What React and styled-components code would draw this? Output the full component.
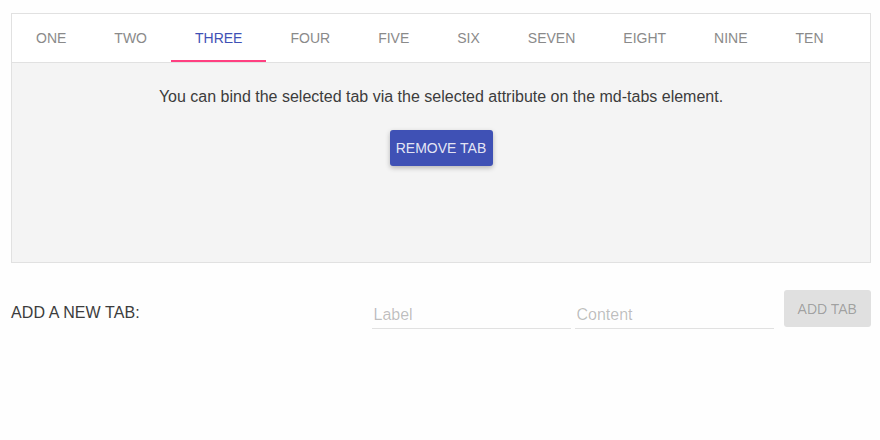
import React from 'react';
import styled, { createGlobalStyle } from 'styled-components';

const tabs = ['One', 'Two', 'Three', 'Four', 'Five', 'Six', 'Seven', 'Eight', 'Nine', 'Ten'];

const App = () => {
  const selected = 2;
  return (
    <Page>
      <GlobalStyle />
      <Card>
        <TabBar>
          {tabs.map((t, i) => (
            <Tab key={t} active={i === selected}>
              {t}
            </Tab>
          ))}
        </TabBar>
        <Content>
          <p>You can bind the selected tab via the selected attribute on the md-tabs element.</p>
          <RaisedButton>Remove Tab</RaisedButton>
        </Content>
      </Card>
      <AddRow>
        <AddLabel>ADD A NEW TAB:</AddLabel>
        <Field placeholder="Label" />
        <Field placeholder="Content" />
        <FlatButton disabled>Add Tab</FlatButton>
      </AddRow>
    </Page>
  );
};

export default App;

const GlobalStyle = createGlobalStyle`
  body {
    margin: 0;
    background: #fefefe;
    font-family: "Liberation Sans", Arial, sans-serif;
  }
`;

const Page = styled.div`
  padding: 13px 9px 0 11px;
`;

const Card = styled.div`
  border: 1px solid #e1e1e1;
  background: #fff;
  height: 248px;
  display: flex;
  flex-direction: column;
`;

const TabBar = styled.div`
  display: flex;
  height: 48px;
  border-bottom: 1px solid #e1e1e1;
`;

const Tab = styled.div`
  position: relative;
  padding: 0 24px;
  display: flex;
  align-items: center;
  font-size: 14px;
  text-transform: uppercase;
  color: ${(p) => (p.active ? '#3f51b5' : '#8a8a8a')};

  &::after {
    content: '';
    display: ${(p) => (p.active ? 'block' : 'none')};
    position: absolute;
    left: 0;
    right: 0;
    bottom: 0;
    height: 2px;
    background: #ff4081;
  }
`;

const Content = styled.div`
  flex: 1;
  background: #f4f4f4;
  display: flex;
  flex-direction: column;
  align-items: center;
  padding-top: 25px;

  p {
    margin: 0 0 24px;
    font-size: 16px;
    color: #3c3c3c;
  }
`;

const RaisedButton = styled.button`
  height: 36px;
  padding: 0 6px;
  min-width: 103px;
  border: none;
  border-radius: 3px;
  background: #3f51b5;
  color: rgba(255, 255, 255, 0.87);
  font-family: inherit;
  font-size: 14px;
  text-transform: uppercase;
  box-shadow: 0 2px 5px 0 rgba(0, 0, 0, 0.26);
`;

const AddRow = styled.div`
  display: flex;
  align-items: flex-start;
  margin-top: 27px;
`;

const AddLabel = styled.div`
  width: 361px;
  padding-top: 14px;
  font-size: 16px;
  letter-spacing: 0.1px;
  color: #3c3c3c;
`;

const Field = styled.input`
  width: 199px;
  margin: 14px 2px 0;
  padding: 2px 2px 4px;
  box-sizing: border-box;
  border: none;
  border-bottom: 1px solid #e1e1e1;
  background: transparent;
  font-family: inherit;
  font-size: 16px;
  outline: none;

  &::placeholder {
    color: rgba(0, 0, 0, 0.26);
  }
`;

const FlatButton = styled.button`
  margin-left: 8px;
  width: 88px;
  height: 37px;
  border: none;
  border-radius: 3px;
  background: #e0e0e0;
  color: rgba(0, 0, 0, 0.3);
  font-family: inherit;
  font-size: 14px;
  text-transform: uppercase;
`;
